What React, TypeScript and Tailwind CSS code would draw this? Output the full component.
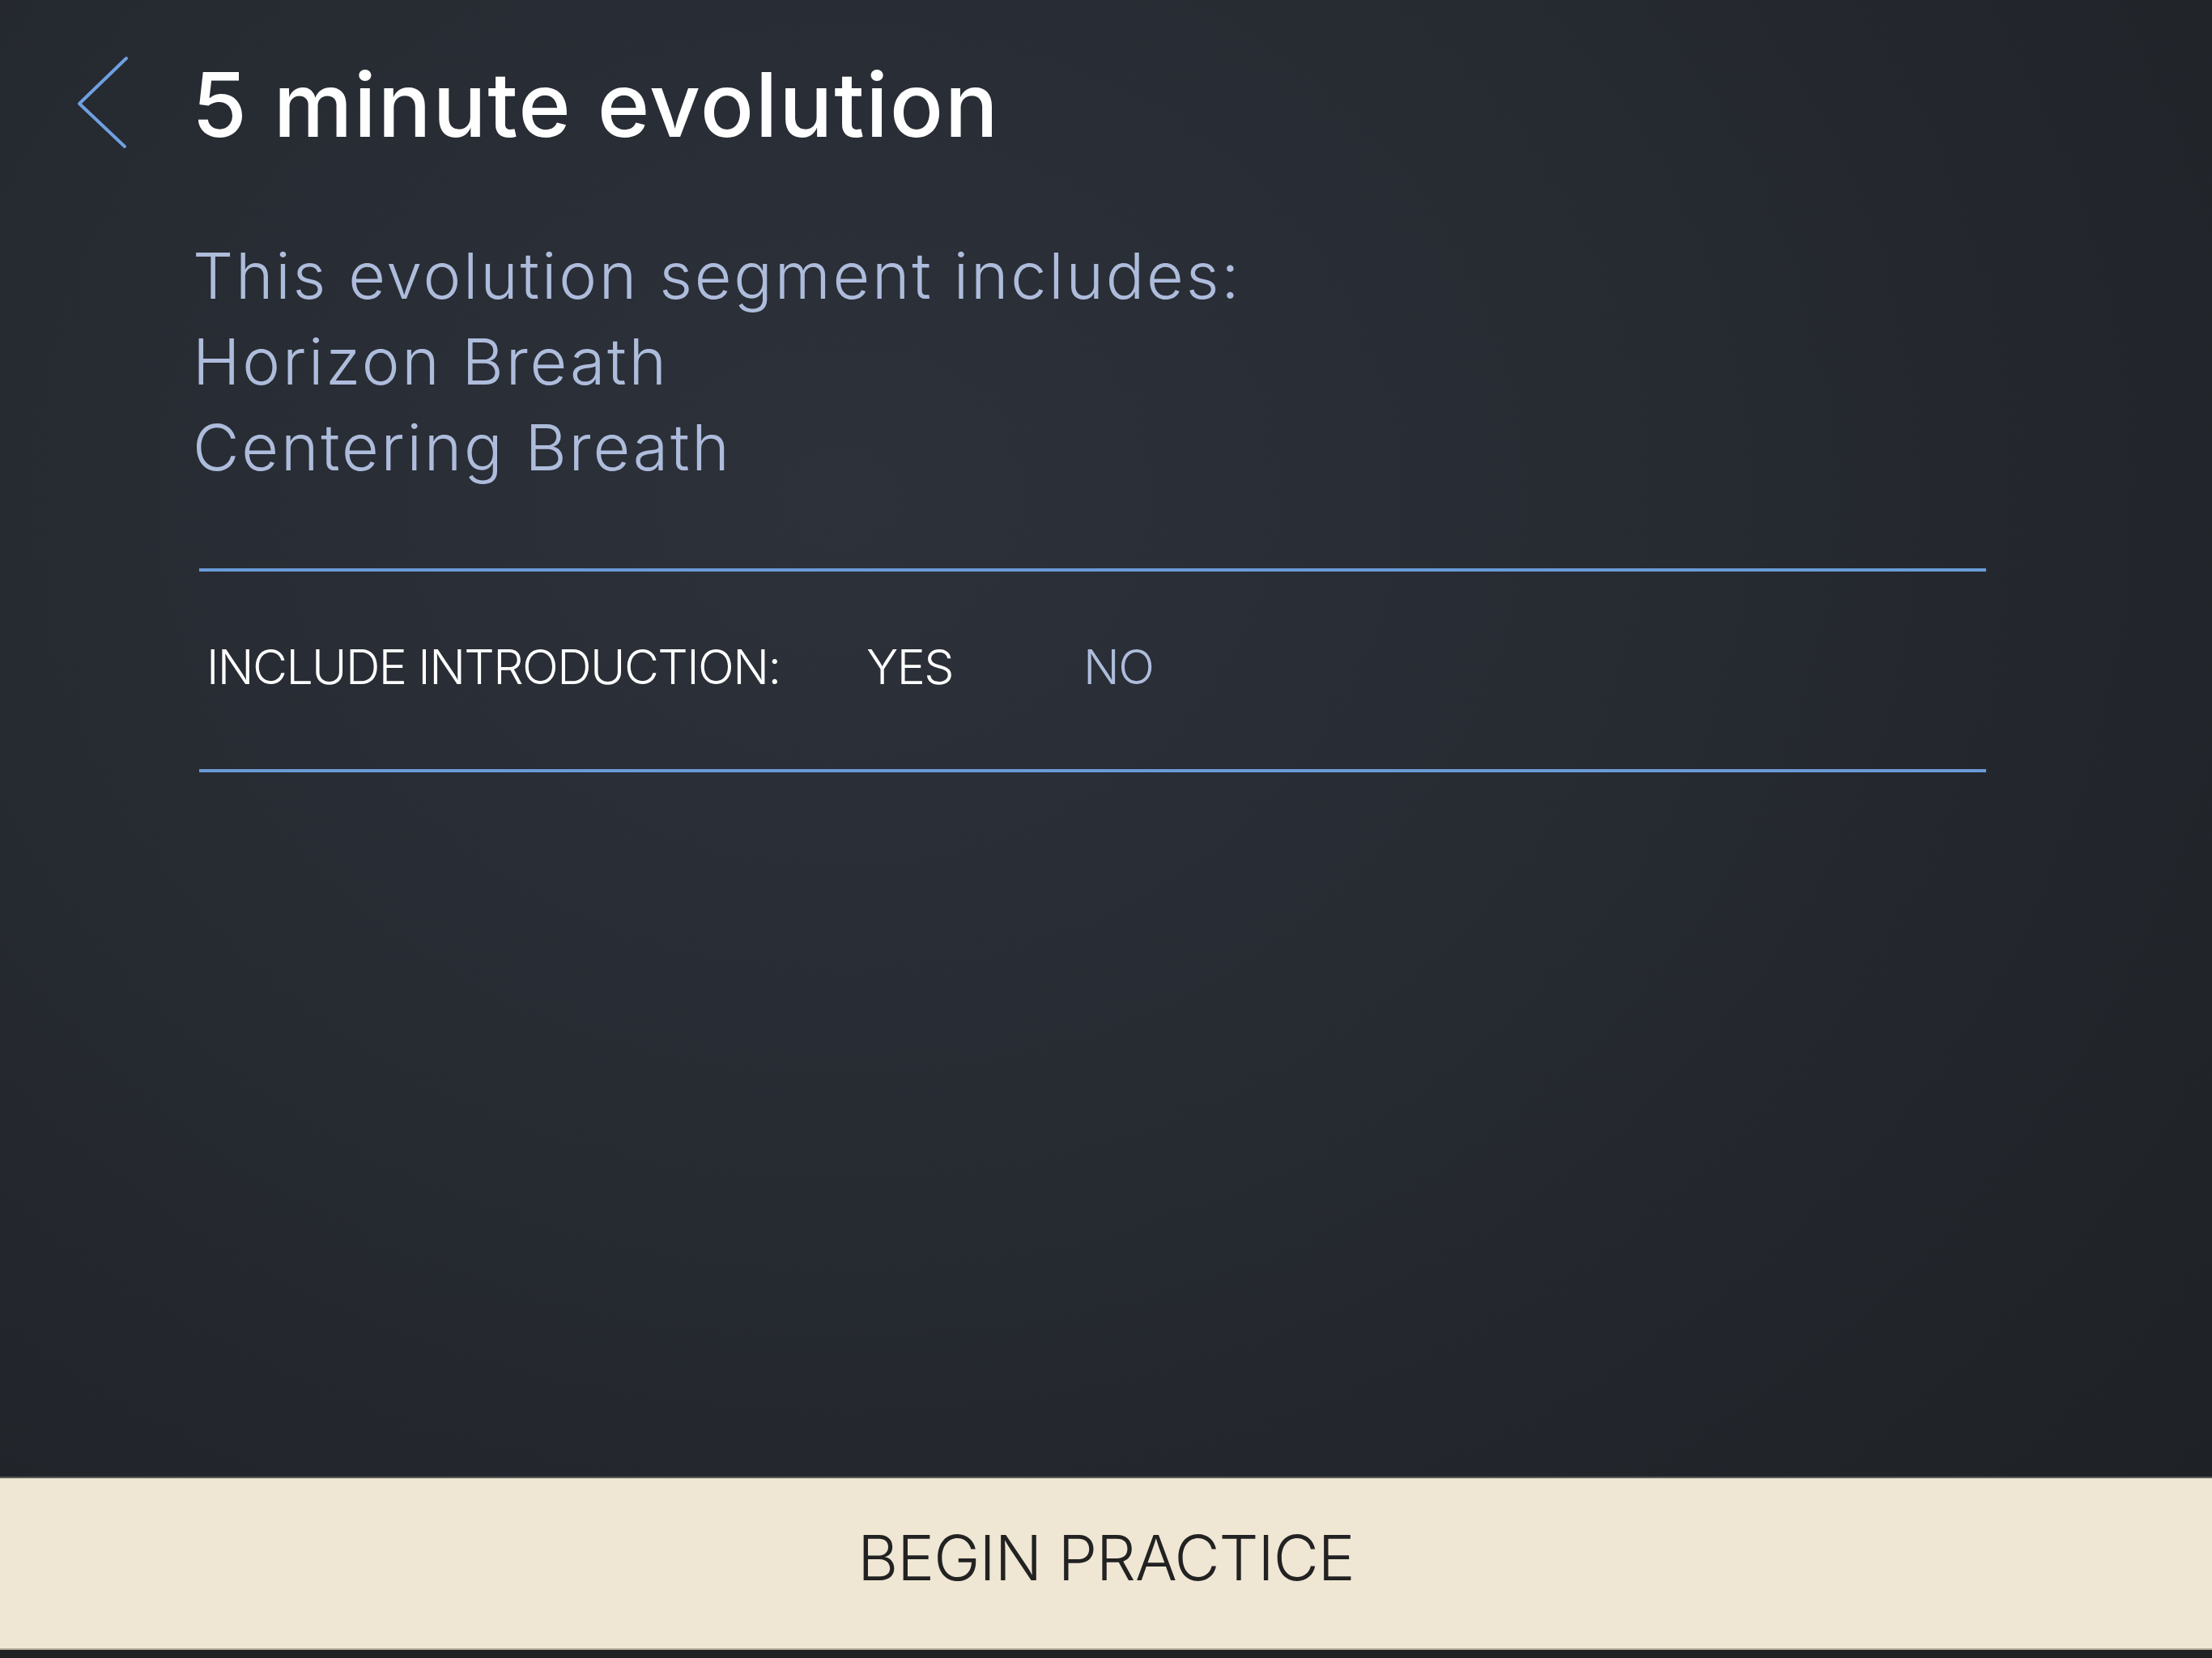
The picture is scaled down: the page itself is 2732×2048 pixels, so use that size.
export default function App() {
  return (
    <div
      className="flex h-[2048px] w-[2732px] flex-col overflow-hidden bg-[radial-gradient(ellipse_at_38%_30%,#2d313a_0%,#262a31_45%,#1d2024_100%)]"
      style={{ fontFamily: "Inter, 'Noto Sans', sans-serif" }}
    >
      <header className="flex items-start pt-[74px]">
        <button className="ml-[94px] mt-[-6px] h-[116px] w-[66px]" aria-label="Back">
          <svg viewBox="0 0 66 116" className="h-full w-full" fill="none">
            <polyline
              points="62,4 4,60 60,113"
              stroke="#6fa0e0"
              strokeWidth="4"
              strokeLinecap="round"
              strokeLinejoin="round"
            />
          </svg>
        </button>
        <h1 className="ml-[77px] text-[110px] font-medium leading-[110px] tracking-[1.7px] text-white">
          5 minute evolution
        </h1>
      </header>

      <div className="ml-[238px] mt-[103px] text-[79px] font-light leading-[106px] tracking-[2.8px] text-[#aebcdc]">
        <p>This evolution segment includes:</p>
        <p>Horizon Breath</p>
        <p>Centering Breath</p>
      </div>

      <div className="ml-[246px] mt-[97px] w-[2207px]">
        <div className="h-[4px] bg-[#6a9bd8]" />
        <div className="flex pb-[97px] pl-[9px] pt-[88px] text-[59px] font-light leading-[59px] tracking-[-1.6px]">
          <span className="w-[815px] text-white">INCLUDE INTRODUCTION:</span>
          <button className="w-[268px] text-left text-white">YES</button>
          <button className="text-left text-[#aebcdc]">NO</button>
        </div>
        <div className="h-[4px] bg-[#6a9bd8]" />
      </div>

      <div className="flex-1" />

      <button className="flex h-[214px] w-full items-center justify-center border-t-2 border-b-2 border-t-[#5d5c5a] border-b-[#b5ab98] bg-[#efe6d3] pb-[12px] text-[77px] font-light tracking-[-1px] text-[#222222]">
        BEGIN PRACTICE
      </button>
      <div className="h-[10px] bg-[#202122]" />
    </div>
  );
}
